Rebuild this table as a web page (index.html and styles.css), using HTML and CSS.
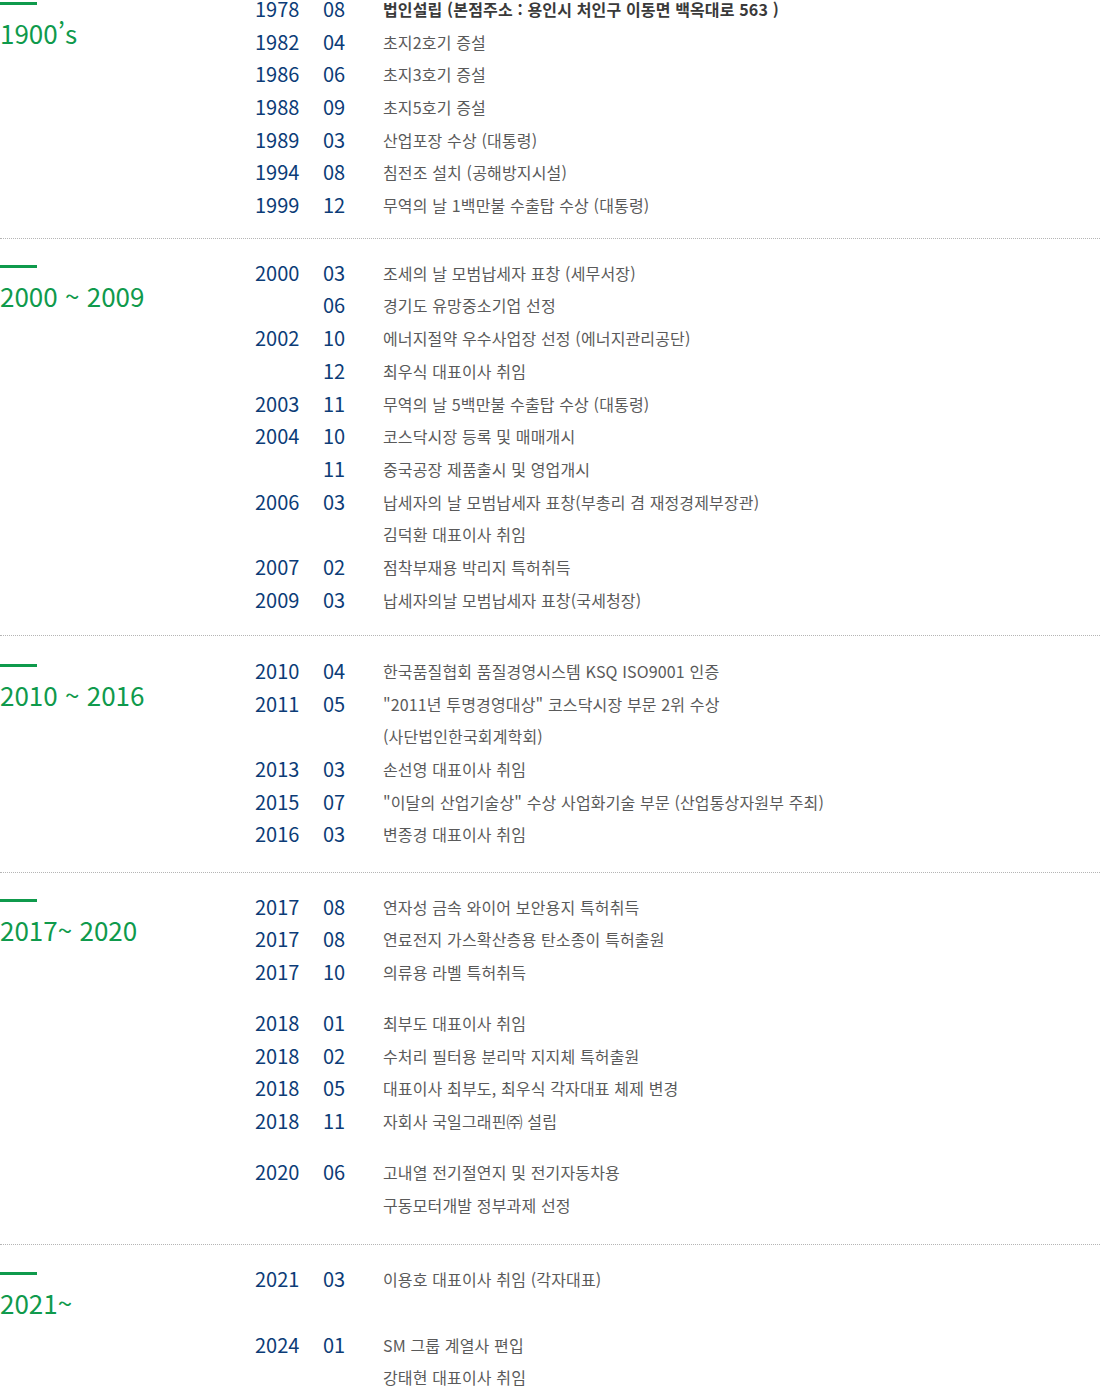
FILE: index.html
```html
<!DOCTYPE html>
<html lang="ko">
<head>
<meta charset="utf-8">
<title>연혁</title>
<link rel="stylesheet" href="styles.css">
</head>
<body>
<div class="history">
  <section class="era era-1">
    <div class="era-head"><span class="bar"></span><h2 class="era-title">1900’s</h2></div>
    <ul class="events">
      <li class="ev"><span class="y">1978</span><span class="m">08</span><span class="t strong">법인설립 (본점주소 : 용인시 처인구 이동면 백옥대로 563 )</span></li>
      <li class="ev"><span class="y">1982</span><span class="m">04</span><span class="t">초지2호기 증설</span></li>
      <li class="ev"><span class="y">1986</span><span class="m">06</span><span class="t">초지3호기 증설</span></li>
      <li class="ev"><span class="y">1988</span><span class="m">09</span><span class="t">초지5호기 증설</span></li>
      <li class="ev"><span class="y">1989</span><span class="m">03</span><span class="t">산업포장 수상 (대통령)</span></li>
      <li class="ev"><span class="y">1994</span><span class="m">08</span><span class="t">침전조 설치 (공해방지시설)</span></li>
      <li class="ev"><span class="y">1999</span><span class="m">12</span><span class="t">무역의 날 1백만불 수출탑 수상 (대통령)</span></li>
    </ul>
  </section>
  <section class="era era-2">
    <div class="era-head"><span class="bar"></span><h2 class="era-title">2000 ~ 2009</h2></div>
    <ul class="events">
      <li class="ev"><span class="y">2000</span><span class="m">03</span><span class="t">조세의 날 모범납세자 표창 (세무서장)</span></li>
      <li class="ev"><span class="y"></span><span class="m">06</span><span class="t">경기도 유망중소기업 선정</span></li>
      <li class="ev"><span class="y">2002</span><span class="m">10</span><span class="t">에너지절약 우수사업장 선정 (에너지관리공단)</span></li>
      <li class="ev"><span class="y"></span><span class="m">12</span><span class="t">최우식 대표이사 취임</span></li>
      <li class="ev"><span class="y">2003</span><span class="m">11</span><span class="t">무역의 날 5백만불 수출탑 수상 (대통령)</span></li>
      <li class="ev"><span class="y">2004</span><span class="m">10</span><span class="t">코스닥시장 등록 및 매매개시</span></li>
      <li class="ev"><span class="y"></span><span class="m">11</span><span class="t">중국공장 제품출시 및 영업개시</span></li>
      <li class="ev"><span class="y">2006</span><span class="m">03</span><span class="t">납세자의 날 모범납세자 표창(부총리 겸 재정경제부장관)</span></li>
      <li class="ev"><span class="y"></span><span class="m"></span><span class="t">김덕환 대표이사 취임</span></li>
      <li class="ev"><span class="y">2007</span><span class="m">02</span><span class="t">점착부재용 박리지 특허취득</span></li>
      <li class="ev"><span class="y">2009</span><span class="m">03</span><span class="t">납세자의날 모범납세자 표창(국세청장)</span></li>
    </ul>
  </section>
  <section class="era era-3">
    <div class="era-head"><span class="bar"></span><h2 class="era-title">2010 ~ 2016</h2></div>
    <ul class="events">
      <li class="ev"><span class="y">2010</span><span class="m">04</span><span class="t">한국품질협회 품질경영시스템 KSQ ISO9001 인증</span></li>
      <li class="ev"><span class="y">2011</span><span class="m">05</span><span class="t">"2011년 투명경영대상" 코스닥시장 부문 2위 수상</span></li>
      <li class="ev"><span class="y"></span><span class="m"></span><span class="t">(사단법인한국회계학회)</span></li>
      <li class="ev"><span class="y">2013</span><span class="m">03</span><span class="t">손선영 대표이사 취임</span></li>
      <li class="ev"><span class="y">2015</span><span class="m">07</span><span class="t">"이달의 산업기술상" 수상 사업화기술 부문 (산업통상자원부 주최)</span></li>
      <li class="ev"><span class="y">2016</span><span class="m">03</span><span class="t">변종경 대표이사 취임</span></li>
    </ul>
  </section>
  <section class="era era-4">
    <div class="era-head"><span class="bar"></span><h2 class="era-title">2017~ 2020</h2></div>
    <ul class="events">
      <li class="ev"><span class="y">2017</span><span class="m">08</span><span class="t">연자성 금속 와이어 보안용지 특허취득</span></li>
      <li class="ev"><span class="y">2017</span><span class="m">08</span><span class="t">연료전지 가스확산층용 탄소종이 특허출원</span></li>
      <li class="ev"><span class="y">2017</span><span class="m">10</span><span class="t">의류용 라벨 특허취득</span></li>
      <li class="ev group-start"><span class="y">2018</span><span class="m">01</span><span class="t">최부도 대표이사 취임</span></li>
      <li class="ev"><span class="y">2018</span><span class="m">02</span><span class="t">수처리 필터용 분리막 지지체 특허출원</span></li>
      <li class="ev"><span class="y">2018</span><span class="m">05</span><span class="t">대표이사 최부도, 최우식 각자대표 체제 변경</span></li>
      <li class="ev"><span class="y">2018</span><span class="m">11</span><span class="t">자회사 국일그래핀㈜ 설립</span></li>
      <li class="ev group-start"><span class="y">2020</span><span class="m">06</span><span class="t">고내열 전기절연지 및 전기자동차용</span></li>
      <li class="ev"><span class="y"></span><span class="m"></span><span class="t">구동모터개발 정부과제 선정</span></li>
    </ul>
  </section>
  <section class="era era-5">
    <div class="era-head"><span class="bar"></span><h2 class="era-title">2021~</h2></div>
    <ul class="events">
      <li class="ev"><span class="y">2021</span><span class="m">03</span><span class="t">이용호 대표이사 취임 (각자대표)</span></li>
      <li class="ev group-gap"><span class="y">2024</span><span class="m">01</span><span class="t">SM 그룹 계열사 편입</span></li>
      <li class="ev"><span class="y"></span><span class="m"></span><span class="t">강태현 대표이사 취임</span></li>
    </ul>
  </section>
</div>
</body>
</html>
```

FILE: styles.css
```css
html, body {
  margin: 0;
  padding: 0;
  background: #fff;
}

body {
  width: 1100px;
  overflow: hidden;
  font-family: "Noto Sans CJK KR", "Noto Sans", sans-serif;
}

.history {
  margin-top: -25px;
}

.era {
  display: grid;
  grid-template-columns: 255px 1fr;
  padding: 17.5px 0 17px;
  border-top: 1px dotted #b5b5b5;
}

.era:first-child {
  border-top: none;
}

.era-1 { padding-bottom: 16.6px; }
.era-2 { padding-bottom: 18.6px; }
.era-3 { padding-top: 19px; padding-bottom: 21px; }
.era-4 { padding-bottom: 23px; }

.era-head {
  display: flex;
  flex-direction: column;
  padding-top: 9px;
}

.bar {
  display: block;
  width: 37px;
  height: 3px;
  background: #0f9a4c;
}

.era-title {
  margin: 12px 0 0;
  font-size: 26px;
  line-height: 32px;
  font-weight: 400;
  color: #0f9a4c;
  letter-spacing: 0;
}

.events {
  list-style: none;
  margin: 0;
  padding: 0;
}

.ev {
  display: grid;
  grid-template-columns: 68px 60px 1fr;
  height: 32.7px;
  align-items: center;
}

.ev.group-start {
  margin-top: 18.5px;
}

.ev.group-gap {
  margin-top: 32.7px;
}

.y, .m {
  font-size: 20px;
  line-height: 32px;
  color: #0c3c77;
}

.t {
  font-size: 16px;
  line-height: 32px;
  color: #5a5a5a;
  letter-spacing: 0.15px;
}

.t.strong {
  color: #3a3a3a;
  font-weight: 700;
}
```
